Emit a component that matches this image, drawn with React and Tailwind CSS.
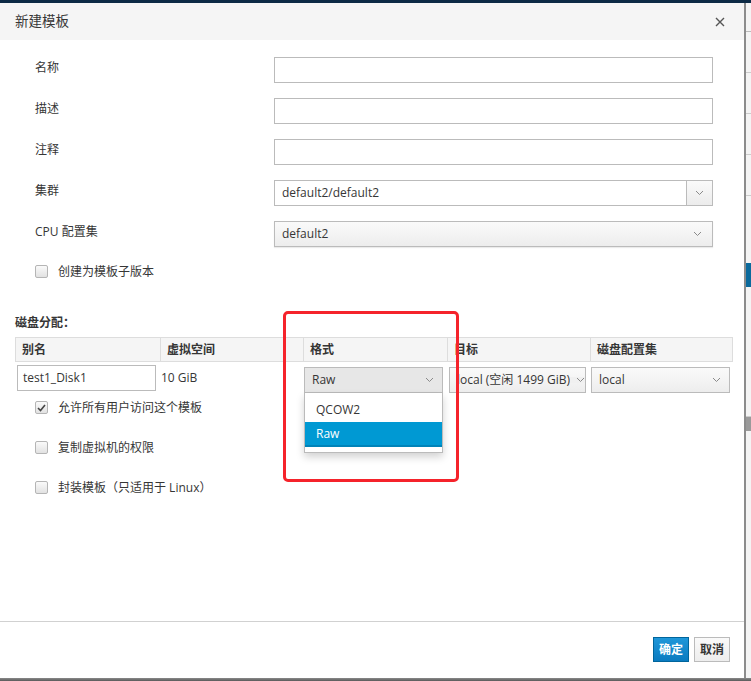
import React from "react";

const font = { fontFamily: '"Open Sans", "Noto Sans CJK SC", sans-serif' };

function Chevron({ className = "" }) {
  return (
    <svg width="9" height="6" viewBox="0 0 9 6" className={className}>
      <path d="M1 1 L4.5 4.5 L8 1" fill="none" stroke="#8a8a8a" strokeWidth="1" />
    </svg>
  );
}

function Checkbox({ checked }) {
  return (
    <span className="w-[13px] h-[13px] rounded-[2px] border border-[#b5b5b5] bg-gradient-to-b from-[#fafafa] to-[#e2e2e2] flex items-center justify-center">
      {checked && (
        <svg width="9" height="8" viewBox="0 0 9 8">
          <path d="M1 4 L3.5 6.5 L8 1" fill="none" stroke="#444" strokeWidth="1.6" />
        </svg>
      )}
    </span>
  );
}

function TextRow({ label }) {
  return (
    <div className="flex items-center h-[26px] mb-[15px]">
      <div className="w-[274px] pl-[35px] pb-[4px] text-[12px] text-[#363636]">{label}</div>
      <div className="w-[439px] h-[26px] border border-[#bbb] bg-white" />
    </div>
  );
}

export default function App() {
  return (
    <div className="w-[751px] h-[681px] bg-[#f3f3f3] overflow-hidden flex flex-col" style={font}>
      <div className="h-[3px] bg-[#0d2a45] shrink-0" />
      <div className="flex flex-1 min-h-0">
        {/* modal */}
        <div className="w-[746px] bg-white border-r-2 border-[#8c8c8c] flex flex-col relative">
          {/* header */}
          <div className="h-[37px] bg-[#f5f5f5] flex items-center justify-between pl-[15px] pr-[19px] shrink-0">
            <span className="text-[13.5px] text-[#363636]">新建模板</span>
            <svg width="10" height="10" viewBox="0 0 10 10">
              <path d="M1 1 L9 9 M9 1 L1 9" stroke="#555" strokeWidth="1.4" />
            </svg>
          </div>
          {/* body */}
          <div className="flex-1 pt-[17px] relative">
            <TextRow label="名称" />
            <TextRow label="描述" />
            <TextRow label="注释" />
            <div className="flex items-center h-[26px] mb-[15px]">
              <div className="w-[274px] pl-[35px] pb-[4px] text-[12px] text-[#363636]">集群</div>
              <div className="w-[439px] h-[26px] border border-[#bbb] bg-white flex">
                <div className="flex-1 pl-[7px] flex items-center text-[12px] text-[#363636]">default2/default2</div>
                <div className="w-[26px] border-l border-[#bbb] bg-gradient-to-b from-[#fafafa] to-[#ececec] flex items-center justify-center">
                  <Chevron />
                </div>
              </div>
            </div>
            <div className="flex items-center h-[26px]">
              <div className="w-[274px] pl-[35px] pb-[4px] text-[12px] text-[#363636]">CPU 配置集</div>
              <div className="w-[439px] h-[26px] border border-[#bbb] bg-gradient-to-b from-[#fafafa] to-[#ededed] shadow-[0_1px_1px_rgba(0,0,0,0.08)] flex items-center justify-between pl-[7px] pr-[10px] text-[12px] text-[#363636]">
                <span>default2</span>
                <Chevron />
              </div>
            </div>
            <div className="flex items-center h-[13px] mt-[18px] pl-[35px] gap-[10px] text-[12px] text-[#363636]">
              <Checkbox />
              <span>创建为模板子版本</span>
            </div>
            {/* disk */}
            <div className="mt-[38px] pl-[15px] text-[12px] font-bold text-[#363636] h-[14px] leading-[14px]">磁盘分配：</div>
            <div className="ml-[15px] w-[718px] mt-[7px]">
              <div className="flex h-[25px] bg-[#f5f5f5] border border-[#ddd] text-[12px] font-bold text-[#363636]">
                <div className="w-[145px] pl-[6px] flex items-center border-r border-[#ddd]">别名</div>
                <div className="w-[143px] pl-[6px] flex items-center border-r border-[#ddd]">虚拟空间</div>
                <div className="w-[144px] pl-[6px] flex items-center border-r border-[#ddd]">格式</div>
                <div className="w-[143px] pl-[6px] flex items-center border-r border-[#ddd]">目标</div>
                <div className="flex-1 pl-[6px] flex items-center">磁盘配置集</div>
              </div>
              <div className="flex items-center h-[31px] text-[12px] text-[#363636]">
                <div className="w-[145px] pl-[2px]">
                  <div className="w-[139px] h-[26px] border border-[#bbb] pl-[5px] flex items-center">test1_Disk1</div>
                </div>
                <div className="w-[143px] pl-[1px]">10 GiB</div>
                <div className="w-[144px] pl-[1px] relative">
                  <div className="w-[139px] h-[26px] border border-[#bbb] bg-[#e7e7e7] flex items-center justify-between pl-[7px] pr-[8px] mt-[5px]">
                    <span>Raw</span>
                    <Chevron />
                  </div>
                  <div className="absolute left-[1px] top-[31px] w-[139px] bg-white border border-[#bbb] border-t-0 shadow-[0_4px_8px_rgba(0,0,0,0.18)] pt-[5px] pb-[5px] z-10">
                    <div className="h-[24px] pl-[11px] flex items-center">QCOW2</div>
                    <div className="h-[25px] pl-[11px] flex items-center bg-[#0099d3] text-white border-b-2 border-[#0083b8]">Raw</div>
                  </div>
                </div>
                <div className="w-[143px] pl-[2px]">
                  <div className="w-[137px] h-[26px] border border-[#bbb] bg-gradient-to-b from-[#fafafa] to-[#ededed] flex items-center justify-between pl-[7px] pr-[8px] mt-[5px] overflow-hidden whitespace-nowrap">
                    <span>local (空闲 1499 GiB)</span>
                    <span className="bg-[#f0f0f0] pl-[6px]"><Chevron /></span>
                  </div>
                </div>
                <div className="flex-1 pl-[1px]">
                  <div className="w-[139px] h-[26px] border border-[#bbb] bg-gradient-to-b from-[#fafafa] to-[#ededed] flex items-center justify-between pl-[7px] pr-[8px] mt-[5px]">
                    <span>local</span>
                    <Chevron />
                  </div>
                </div>
              </div>
            </div>
            <div className="pl-[35px] text-[12px] text-[#363636]">
              <div className="flex items-center h-[13px] mt-[8px] gap-[10px]">
                <Checkbox checked />
                <span>允许所有用户访问这个模板</span>
              </div>
              <div className="flex items-center h-[13px] mt-[27px] gap-[10px]">
                <Checkbox />
                <span>复制虚拟机的权限</span>
              </div>
              <div className="flex items-center h-[13px] mt-[27px] gap-[10px]">
                <Checkbox />
                <span>封装模板（只适用于 Linux）</span>
              </div>
            </div>
            {/* annotation */}
            <div className="absolute left-[283px] top-[271px] w-[176px] h-[171px] border-[3px] border-[#f5232b] rounded-[5px] z-20 pointer-events-none" />
          </div>
          {/* footer */}
          <div className="h-[57px] border-t border-[#d1d1d1] flex items-center justify-end gap-[5px] pr-[14px] pb-[1px] shrink-0">
            <button className="h-[25px] px-[5px] text-[12px] font-bold text-white bg-gradient-to-b from-[#1f97d9] to-[#0a7bc0] border border-[#00659c]">确定</button>
            <button className="h-[25px] px-[5px] text-[12px] font-bold text-[#363636] bg-gradient-to-b from-[#fafafa] to-[#ededed] border border-[#bbb]">取消</button>
          </div>
        </div>
        {/* background strip */}
        <div className="flex-1 flex flex-col bg-[#f4f4f4]">
          <div className="h-[29px] border-b border-[#bbb]" />
          <div className="h-[41px] border-b border-[#ccc]" />
          <div className="h-[41px] border-b border-[#ccc]" />
          <div className="h-[41px] border-b border-[#ccc]" />
          <div className="h-[41px] border-b border-[#ccc]" />
          <div className="h-[67px]" />
          <div className="h-[24px] bg-[#0b6a9c]" />
          <div className="h-[130px] border-b border-[#ccc]" />
          <div className="h-[14px] bg-[#9a9a9a]" />
        </div>
      </div>
      <div className="h-[3px] bg-gradient-to-b from-[#8a8a8a] to-[#5a5a5a] shrink-0" />
    </div>
  );
}
